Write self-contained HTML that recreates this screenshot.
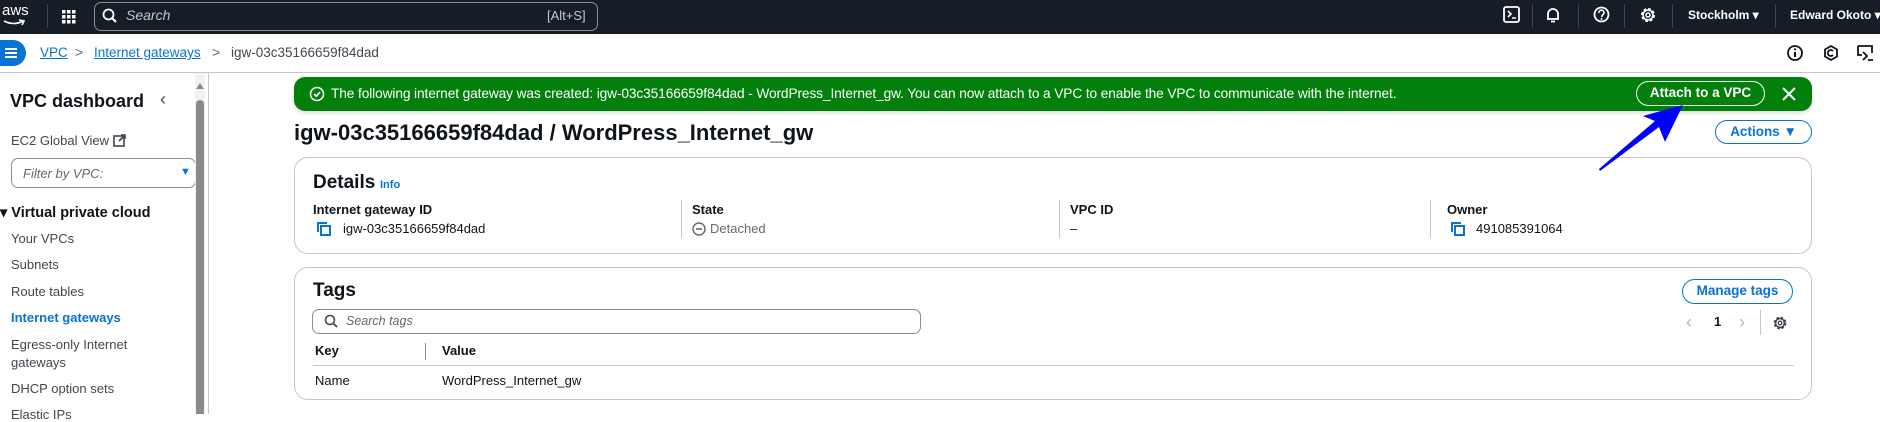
<!DOCTYPE html>
<html><head><meta charset="utf-8"><style>
*{box-sizing:border-box;margin:0;padding:0}
body{width:1880px;height:414px;overflow:hidden;background:#fff;font-family:"Liberation Sans",sans-serif;color:#0f141a;position:relative;font-size:13px}
.a{position:absolute;white-space:nowrap}
.top{position:absolute;left:0;top:0;width:1880px;height:34px;background:#161d26}
.w{color:#fff}
.dv{position:absolute;top:4px;width:1px;height:24px;background:#424650}
.lnk{color:#0972d3;text-decoration:underline}
.card{position:absolute;border:1px solid #c6c6cd;border-radius:14px;background:#fff}
.lbl{font-weight:bold;font-size:13px}
.vd{position:absolute;width:1px;background:#c6c6cd}
.btn{position:absolute;border:1.5px solid #0972d3;border-radius:14px;color:#0972d3;font-weight:bold;font-size:13.5px;text-align:center}
.nav{position:absolute;left:11px;font-size:13px;color:#424650}
</style></head><body>
<div class="top"></div>
<div class="a w" style="left:2px;top:2px;font-size:15px">aws</div>
<svg class="a" style="left:3px;top:19px" width="22" height="8"><path d="M1 2 Q11 7 20 2 M16 1 L21 2 L19 6" stroke="#fff" stroke-width="1.6" fill="none"/></svg>
<div class="dv" style="left:47px"></div>
<svg class="a" style="left:62px;top:10px" width="14" height="14" fill="#fff"><rect x="0" y="0" width="3.5" height="3.5"/><rect x="5" y="0" width="3.5" height="3.5"/><rect x="10" y="0" width="3.5" height="3.5"/><rect x="0" y="5" width="3.5" height="3.5"/><rect x="5" y="5" width="3.5" height="3.5"/><rect x="10" y="5" width="3.5" height="3.5"/><rect x="0" y="10" width="3.5" height="3.5"/><rect x="5" y="10" width="3.5" height="3.5"/><rect x="10" y="10" width="3.5" height="3.5"/></svg>
<div class="a" style="left:94px;top:2px;width:504px;height:29px;border:1px solid #8c8c94;border-radius:7px"></div>
<svg class="a" style="left:102px;top:8px" width="16" height="16"><circle cx="6.5" cy="6.5" r="5" stroke="#fff" stroke-width="1.8" fill="none"/><path d="M10 10 L14 14" stroke="#fff" stroke-width="2"/></svg>
<div class="a" style="left:126px;top:7px;color:#c6c6cd;font-style:italic;font-size:14px">Search</div>
<div class="a" style="left:547px;top:8px;color:#c6c6cd;font-size:13px">[Alt+S]</div>
<svg class="a" style="left:1503px;top:6px" width="18" height="18"><rect x="1" y="1" width="15" height="15" rx="2" stroke="#fff" stroke-width="1.8" fill="none"/><path d="M5 5 L8 8 L5 11 M9 12 H13" stroke="#fff" stroke-width="1.6" fill="none"/></svg>
<div class="dv" style="left:1532px"></div>
<svg class="a" style="left:1545px;top:6px" width="16" height="18"><path d="M3 13 V8 a5 5 0 0 1 10 0 V13 H2 H14 M6 15.5 H10" stroke="#fff" stroke-width="1.8" fill="none"/></svg>
<div class="dv" style="left:1578px"></div>
<svg class="a" style="left:1593px;top:6px" width="18" height="18"><circle cx="8.5" cy="8.5" r="7" stroke="#fff" stroke-width="1.8" fill="none"/><path d="M6 7 a2.5 2.5 0 1 1 3.5 2 L8.5 11" stroke="#fff" stroke-width="1.6" fill="none"/><circle cx="8.5" cy="13" r="1" fill="#fff"/></svg>
<div class="dv" style="left:1624px"></div>
<svg class="a" style="left:1639px;top:6px" width="18" height="18"><circle cx="9" cy="9" r="5.5" stroke="#fff" stroke-width="3" stroke-dasharray="2.6 1.7" fill="none"/><circle cx="9" cy="9" r="5" stroke="#fff" stroke-width="1.5" fill="none"/><circle cx="9" cy="9" r="2" stroke="#fff" stroke-width="1.5" fill="none"/></svg>
<div class="dv" style="left:1672px"></div>
<div class="a w" style="left:1688px;top:8px;font-weight:bold;font-size:12px">Stockholm ▾</div>
<div class="dv" style="left:1775px"></div>
<div class="a w" style="left:1790px;top:8px;font-weight:bold;font-size:12px">Edward Okoto ▾</div>

<div class="a" style="left:0;top:72px;width:1880px;height:1px;background:#c6c6cd"></div>
<div class="a" style="left:0;top:40px;width:26px;height:26px;border-radius:0 13px 13px 0;background:#0972d3"></div>
<svg class="a" style="left:4px;top:46px" width="14" height="14"><path d="M1 3 H13 M1 7 H13 M1 11 H13" stroke="#fff" stroke-width="2"/></svg>
<div class="a lnk" style="left:40px;top:45px;font-size:13.5px">VPC</div>
<div class="a" style="left:75px;top:44px;color:#656871;font-size:14px">&gt;</div>
<div class="a lnk" style="left:94px;top:45px;font-size:13.5px">Internet gateways</div>
<div class="a" style="left:212px;top:44px;color:#656871;font-size:14px">&gt;</div>
<div class="a" style="left:231px;top:45px;color:#424650;font-size:13.5px">igw-03c35166659f84dad</div>
<svg class="a" style="left:1786px;top:44px" width="18" height="18"><circle cx="9" cy="9" r="7" stroke="#0f141a" stroke-width="1.8" fill="none"/><path d="M9 8 V13" stroke="#0f141a" stroke-width="2"/><circle cx="9" cy="5.3" r="1.1" fill="#0f141a"/></svg>
<svg class="a" style="left:1822px;top:44px" width="18" height="18"><path d="M9 2 L15 5.5 V12.5 L9 16 L3 12.5 V5.5 Z" stroke="#0f141a" stroke-width="1.8" fill="none"/><path d="M11 7 a3 3 0 1 0 0 4" stroke="#0f141a" stroke-width="1.8" fill="none"/></svg>
<svg class="a" style="left:1856px;top:44px" width="20" height="18"><path d="M2 2 H16 V9 M2 2 V11 H6" stroke="#0f141a" stroke-width="1.8" fill="none"/><path d="M7 8 L11 12 L7 16 M12 16 H17" stroke="#0f141a" stroke-width="1.8" fill="none"/></svg>

<div class="a" style="left:10px;top:91px;font-weight:bold;font-size:18px">VPC dashboard</div>
<div class="a" style="left:160px;top:89px;font-size:18px;color:#424650">‹</div>
<div class="a" style="left:11px;top:133px;font-size:13px;color:#424650">EC2 Global View</div>
<svg class="a" style="left:113px;top:134px" width="13" height="13"><rect x="1" y="2" width="10" height="10" stroke="#424650" stroke-width="1.6" fill="none"/><path d="M6 7 L12 1 M8 1 H12 V5" stroke="#424650" stroke-width="1.6" fill="none"/></svg>
<div class="a" style="left:11px;top:158px;width:185px;height:30px;border:1px solid #8c8c94;border-radius:7px"></div>
<div class="a" style="left:23px;top:166px;font-style:italic;color:#656871;font-size:13px">Filter by VPC:</div>
<div class="a" style="left:180px;top:166px;color:#0972d3;font-size:11px">▼</div>
<div class="a" style="left:0;top:205px;font-weight:bold;font-size:14.5px">▾ Virtual private cloud</div>
<div class="nav" style="top:231px">Your VPCs</div>
<div class="nav" style="top:257px">Subnets</div>
<div class="nav" style="top:284px">Route tables</div>
<div class="nav" style="top:310px;color:#0972d3;font-weight:bold">Internet gateways</div>
<div class="nav" style="top:336px;line-height:18px">Egress-only Internet<br>gateways</div>
<div class="nav" style="top:381px">DHCP option sets</div>
<div class="nav" style="top:407px">Elastic IPs</div>
<div class="a" style="left:195px;top:73px;width:10px;height:341px;background:#f2f2f2"></div>
<div class="a" style="left:196px;top:100px;width:8px;height:314px;background:#8a8a8a;border-radius:4px 4px 0 0"></div>
<svg class="a" style="left:195px;top:82px" width="10" height="8"><path d="M1 7 L5 1 L9 7Z" fill="#8a8a8a"/></svg>
<div class="a" style="left:208px;top:73px;width:1px;height:341px;background:#c6c6cd"></div>

<div class="a" style="left:294px;top:77px;width:1518px;height:34px;background:#037f0c;border-radius:11px;box-shadow:0 2px 4px rgba(0,0,0,.15)"></div>
<svg class="a" style="left:309px;top:86px" width="16" height="16"><circle cx="8" cy="8" r="6.5" stroke="#fff" stroke-width="1.6" fill="none"/><path d="M5 8 L7.3 10.2 L11 6" stroke="#fff" stroke-width="1.6" fill="none"/></svg>
<div class="a w" style="left:331px;top:86px;font-size:13.7px;letter-spacing:-0.1px">The following internet gateway was created: igw-03c35166659f84dad - WordPress_Internet_gw. You can now attach to a VPC to enable the VPC to communicate with the internet.</div>
<div class="a w" style="left:1636px;top:81px;width:129px;height:25px;border:1.5px solid #fff;border-radius:13px;text-align:center;line-height:22px;font-weight:bold;font-size:13.5px">Attach to a VPC</div>
<svg class="a" style="left:1781px;top:86px" width="16" height="16"><path d="M2 2 L14 14 M14 2 L2 14" stroke="#fff" stroke-width="2"/></svg>

<div class="a" style="left:294px;top:120px;font-weight:bold;font-size:22px">igw-03c35166659f84dad / WordPress_Internet_gw</div>
<div class="btn" style="left:1715px;top:120px;width:97px;height:24px;line-height:21px">Actions ▼</div>

<div class="card" style="left:294px;top:157px;width:1518px;height:97px"></div>
<div class="a" style="left:313px;top:172px;font-weight:bold;font-size:19px">Details</div>
<div class="a" style="left:380px;top:179px;color:#0972d3;font-weight:bold;font-size:11px">Info</div>
<div class="a lbl" style="left:313px;top:202px">Internet gateway ID</div>
<div class="a lbl" style="left:692px;top:202px">State</div>
<div class="a lbl" style="left:1070px;top:202px">VPC ID</div>
<div class="a lbl" style="left:1447px;top:202px">Owner</div>
<div class="vd" style="left:681px;top:200px;height:38px"></div>
<div class="vd" style="left:1059px;top:200px;height:38px"></div>
<div class="vd" style="left:1430px;top:200px;height:38px"></div>
<svg class="a" style="left:316px;top:221px" width="15" height="15"><path d="M2 11 V2 H11" stroke="#0972d3" stroke-width="2" fill="none"/><rect x="5" y="5" width="9" height="9" stroke="#0972d3" stroke-width="2" fill="none"/></svg>
<div class="a" style="left:343px;top:221px;color:#0f141a">igw-03c35166659f84dad</div>
<svg class="a" style="left:692px;top:222px" width="14" height="14"><circle cx="7" cy="7" r="6" stroke="#656871" stroke-width="1.4" fill="none"/><path d="M4 7 H10" stroke="#656871" stroke-width="1.6"/></svg>
<div class="a" style="left:710px;top:221px;color:#656871">Detached</div>
<div class="a" style="left:1070px;top:221px">–</div>
<svg class="a" style="left:1450px;top:221px" width="15" height="15"><path d="M2 11 V2 H11" stroke="#0972d3" stroke-width="2" fill="none"/><rect x="5" y="5" width="9" height="9" stroke="#0972d3" stroke-width="2" fill="none"/></svg>
<div class="a" style="left:1476px;top:221px">491085391064</div>

<div class="card" style="left:294px;top:267px;width:1518px;height:133px"></div>
<div class="a" style="left:313px;top:280px;font-weight:bold;font-size:19px">Tags</div>
<div class="btn" style="left:1682px;top:279px;width:111px;height:25px;line-height:22px">Manage tags</div>
<div class="a" style="left:312px;top:309px;width:609px;height:25px;border:1px solid #8c8c94;border-radius:7px"></div>
<svg class="a" style="left:324px;top:314px" width="15" height="15"><circle cx="6" cy="6" r="4.5" stroke="#424650" stroke-width="1.6" fill="none"/><path d="M9.5 9.5 L13 13" stroke="#424650" stroke-width="1.8"/></svg>
<div class="a" style="left:346px;top:314px;font-style:italic;color:#656871;font-size:12.5px">Search tags</div>
<div class="a" style="left:1686px;top:312px;color:#b4b4bb;font-size:18px">‹</div>
<div class="a" style="left:1714px;top:314px;font-weight:bold">1</div>
<div class="a" style="left:1739px;top:312px;color:#b4b4bb;font-size:18px">›</div>
<div class="vd" style="left:1760px;top:310px;height:25px"></div>
<svg class="a" style="left:1772px;top:315px" width="16" height="16"><circle cx="8" cy="8" r="5" stroke="#424650" stroke-width="2.8" stroke-dasharray="2.4 1.6" fill="none"/><circle cx="8" cy="8" r="4.5" stroke="#424650" stroke-width="1.4" fill="none"/><circle cx="8" cy="8" r="1.8" stroke="#424650" stroke-width="1.4" fill="none"/></svg>
<div class="a lbl" style="left:315px;top:343px">Key</div>
<div class="vd" style="left:425px;top:343px;height:17px;background:#8c8c94"></div>
<div class="a lbl" style="left:442px;top:343px">Value</div>
<div class="a" style="left:313px;top:365px;width:1481px;height:1px;background:#c6c6cd"></div>
<div class="a" style="left:315px;top:373px">Name</div>
<div class="a" style="left:442px;top:373px">WordPress_Internet_gw</div>

<svg class="a" style="left:0;top:0" width="1880" height="414"><polygon points="1600,171 1659,127 1665,142 1683,105 1643,116 1655,121 1599,169" fill="#0000ff"/></svg>
</body></html>
